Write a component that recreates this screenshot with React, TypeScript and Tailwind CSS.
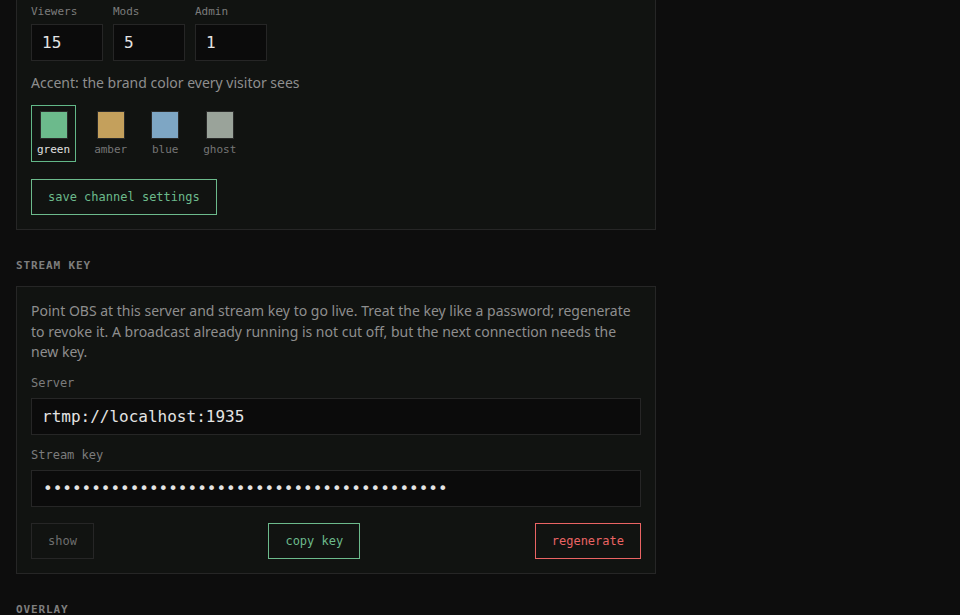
import React from "react";

const mono = "font-['DejaVu_Sans_Mono',monospace]";
const sans = "font-['Noto_Sans',sans-serif]";

function NumField({ label, value }: { label: string; value: string }) {
  return (
    <div className="flex flex-col">
      <div className={`${mono} text-[11px] leading-[16px] text-[#7c7c7c]`}>{label}</div>
      <input
        readOnly
        value={value}
        className={`${mono} mt-1 h-[37px] w-[72px] border border-[#262626] bg-[#0b0b0b] px-[10px] text-[16px] text-[#e4e4e4] outline-none`}
      />
    </div>
  );
}

function Swatch({ name, color, selected }: { name: string; color: string; selected: boolean }) {
  return (
    <div
      className={
        selected
          ? "flex flex-col items-center gap-[2px] px-[6px] pt-[6px] pb-[3px] shadow-[inset_0_0_0_1px_#62b888]"
          : "flex flex-col items-center gap-[2px] px-[6px] pt-[6px] pb-[3px]"
      }
    >
      <div className={`h-[28px] w-[28px] border border-[#2a2a2a] ${color}`} />
      <div
        className={
          selected
            ? `${mono} text-[11px] leading-[18px] text-[#e0e0e0]`
            : `${mono} text-[11px] leading-[18px] text-[#767676]`
        }
      >
        {name}
      </div>
    </div>
  );
}

export default function App() {
  return (
    <div className="min-h-[615px] w-full overflow-hidden bg-[#0d0d0d]">
      <div className="w-[656px] pl-4">
        {/* Channel settings card */}
        <div className="-mt-[11px] border border-[#262626] bg-[#111311] p-[14px]">
          <div className="flex gap-[10px]">
            <NumField label="Viewers" value="15" />
            <NumField label="Mods" value="5" />
            <NumField label="Admin" value="1" />
          </div>
          <div className={`${sans} mt-[12px] text-[14px] leading-[20px] text-[#8e8e8e]`}>
            Accent: the brand color every visitor sees
          </div>
          <div className="mt-[12px] flex gap-3">
            <Swatch name="green" color="bg-[#6cba8c]" selected />
            <Swatch name="amber" color="bg-[#c4a05c]" selected={false} />
            <Swatch name="blue" color="bg-[#7ea6c4]" selected={false} />
            <Swatch name="ghost" color="bg-[#9aa39a]" selected={false} />
          </div>
          <button
            className={`${mono} mt-[17px] h-[36px] border border-[#6cba8c] bg-transparent px-4 text-[12px] text-[#6cba8c]`}
          >
            save channel settings
          </button>
        </div>

        {/* Stream key */}
        <div
          className={`${mono} mt-[28px] mb-[12px] text-[11px] font-bold leading-[16px] tracking-[0.08em] text-[#7e7e7e]`}
        >
          STREAM KEY
        </div>
        <div className="border border-[#262626] bg-[#111311] p-[14px]">
          <p className={`${sans} text-[14px] leading-[20.5px] text-[#8e8e8e]`}>
            Point OBS at this server and stream key to go live. Treat the key like a password;
            regenerate to revoke it. A broadcast already running is not cut off, but the next
            connection needs the new key.
          </p>
          <div className={`${mono} mt-[11.5px] text-[12px] leading-[18px] text-[#7c7c7c]`}>
            Server
          </div>
          <input
            readOnly
            value="rtmp://localhost:1935"
            className={`${mono} mt-[6px] h-[37px] w-full border border-[#262626] bg-[#0b0b0b] px-[10px] text-[16px] text-[#e4e4e4] outline-none`}
          />
          <div className={`${mono} mt-[11px] text-[12px] leading-[18px] text-[#7c7c7c]`}>
            Stream key
          </div>
          <input
            readOnly
            type="password"
            value={"x".repeat(42)}
            className={`${mono} mt-[6px] h-[37px] w-full border border-[#262626] bg-[#0b0b0b] px-[11px] text-[16px] text-[#e4e4e4] outline-none`}
          />
          <div className="mt-4 flex items-center justify-between">
            <button
              className={`${mono} h-[36px] border border-[#262626] bg-transparent px-4 text-[12px] text-[#6e6e6e]`}
            >
              show
            </button>
            <button
              className={`${mono} h-[36px] border border-[#6cba8c] bg-transparent px-4 text-[12px] text-[#6cba8c]`}
            >
              copy key
            </button>
            <button
              className={`${mono} h-[36px] border border-[#ea6464] bg-transparent px-4 text-[12px] text-[#ea6464]`}
            >
              regenerate
            </button>
          </div>
        </div>

        <div
          className={`${mono} mt-[28px] text-[11px] font-bold leading-[16px] tracking-[0.08em] text-[#7e7e7e]`}
        >
          OVERLAY
        </div>
      </div>
    </div>
  );
}
